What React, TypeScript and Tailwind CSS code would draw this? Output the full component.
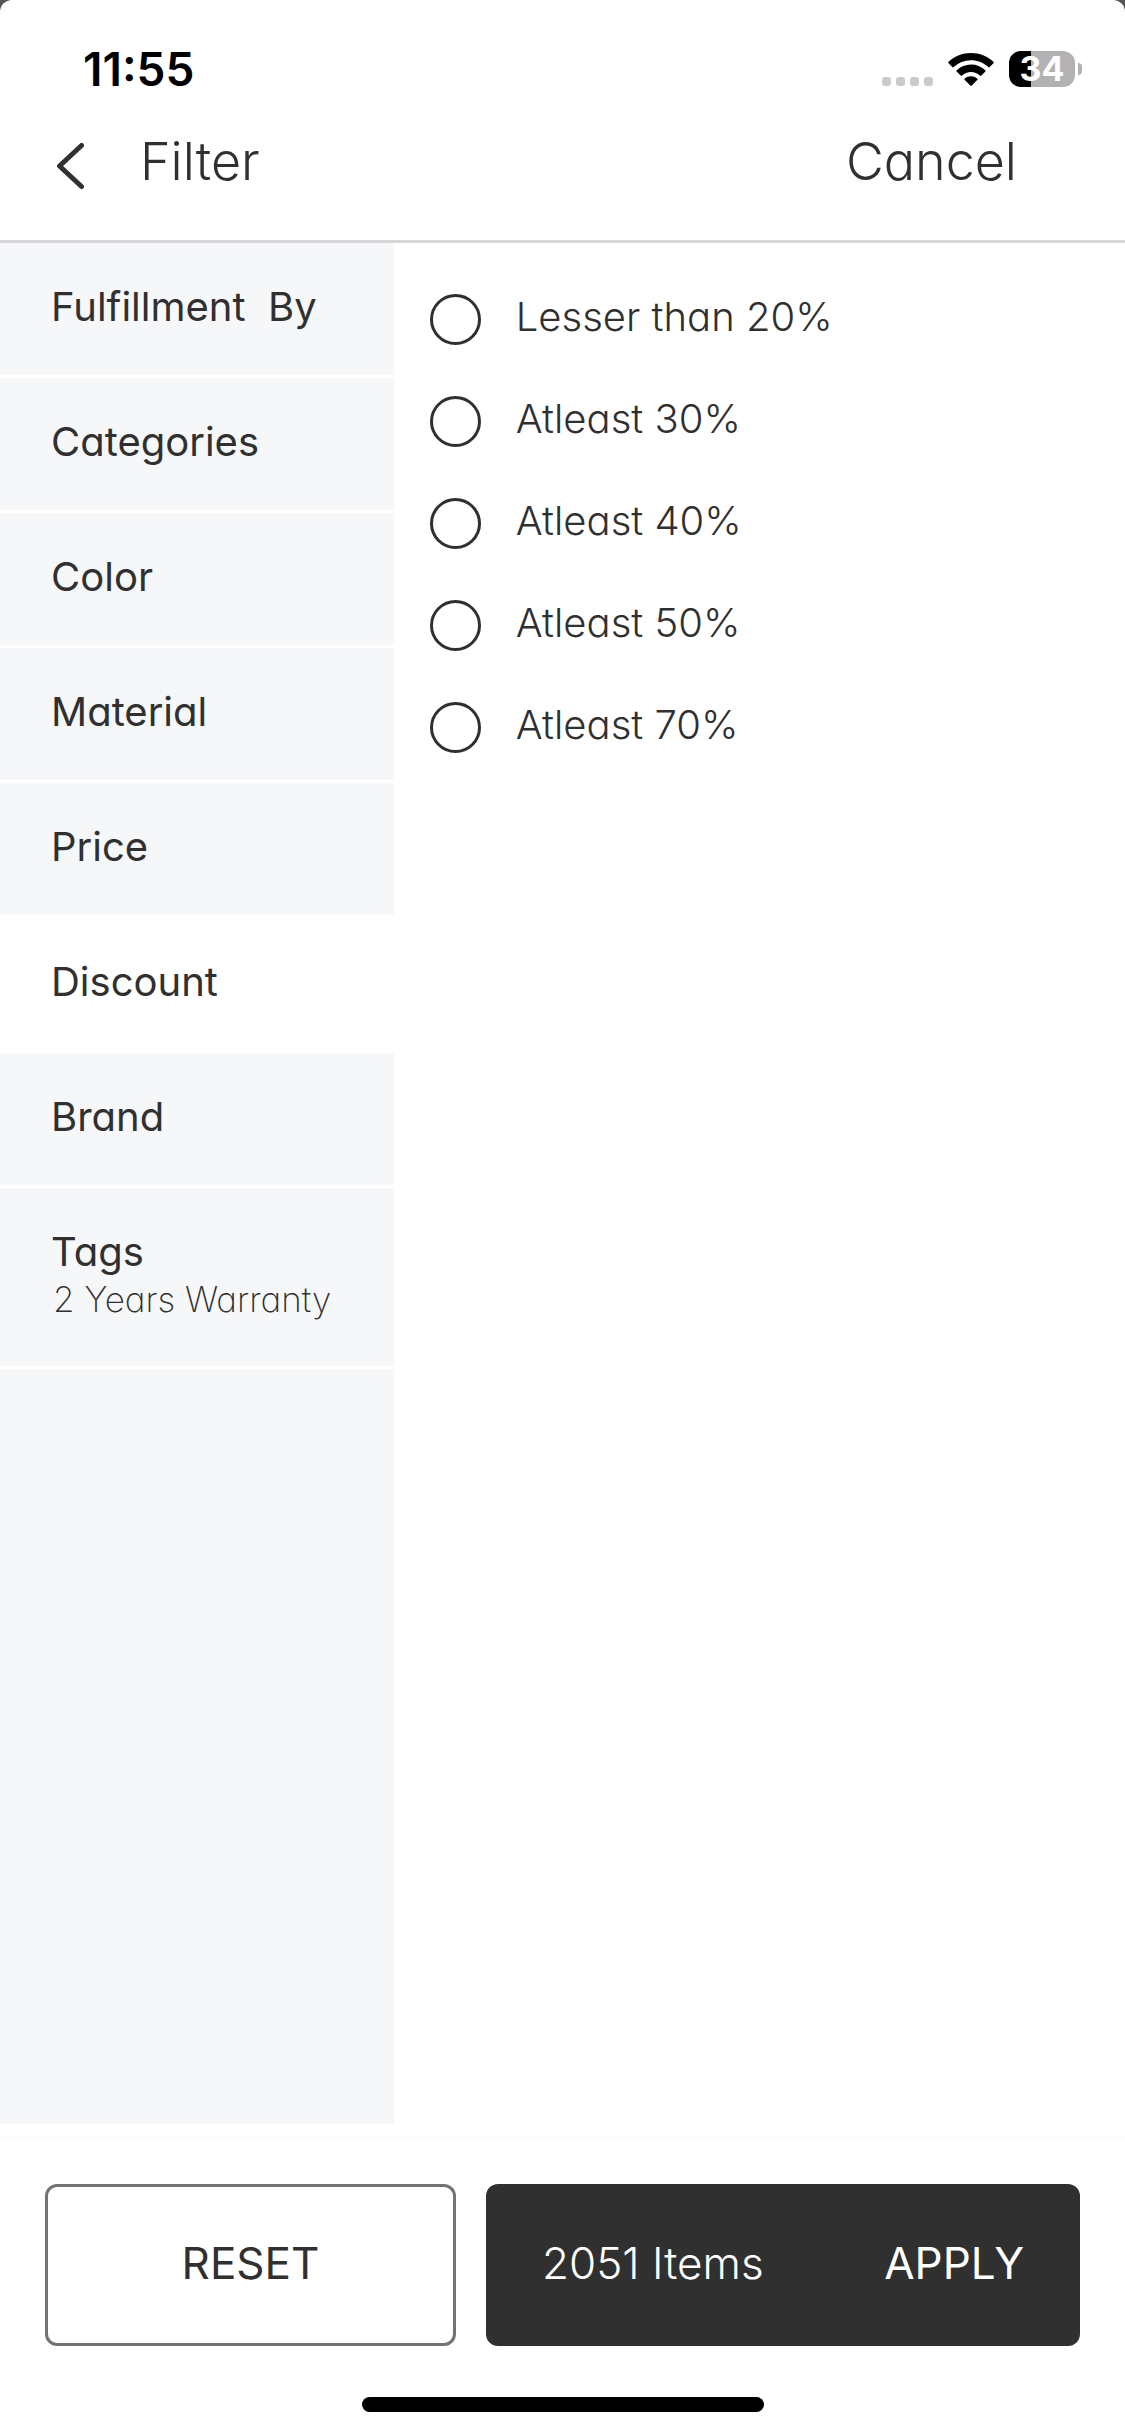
import { useState } from "react";

const FILTERS = [
  { name: "Fulfillment  By" },
  { name: "Categories" },
  { name: "Color" },
  { name: "Material" },
  { name: "Price" },
  { name: "Discount" },
  { name: "Brand" },
  { name: "Tags", selected: "2 Years Warranty" },
];

const DISCOUNTS = ["Lesser than 20%", "Atleast 30%", "Atleast 40%", "Atleast 50%", "Atleast 70%"];

function WifiIcon() {
  return (
    <svg viewBox="0 0 46 33" className="h-[33px] w-[46px]" aria-hidden="true">
      <path d="M23 0C14.5 0 6.6 3.3.6 8.8a1 1 0 0 0 0 1.5l3.7 3.8a1 1 0 0 0 1.4 0A25 25 0 0 1 23 7.2c6.6 0 12.7 2.6 17.3 6.9a1 1 0 0 0 1.4 0l3.7-3.8a1 1 0 0 0 0-1.5C39.4 3.3 31.5 0 23 0Z" />
      <path d="M23 11.6c-5.5 0-10.5 2.1-14.2 5.6a1 1 0 0 0 0 1.5l3.9 3.9a1 1 0 0 0 1.4 0A13 13 0 0 1 23 19c3.4 0 6.5 1.4 8.9 3.6a1 1 0 0 0 1.4 0l3.9-3.9a1 1 0 0 0 0-1.5A20.6 20.6 0 0 0 23 11.6Z" />
      <path d="M23 23.2c-2.4 0-4.5.9-6.2 2.3a1 1 0 0 0 0 1.5l5.5 5.6a1 1 0 0 0 1.4 0l5.5-5.6a1 1 0 0 0 0-1.5A9.4 9.4 0 0 0 23 23.2Z" />
    </svg>
  );
}

function StatusBar() {
  return (
    <div className="flex h-[138px] items-center justify-between pr-[43px] pl-[83px] text-black">
      <span className="text-[46px] leading-[48px] font-semibold">11:55</span>
      <div className="flex items-center">
        <div className="flex gap-[5px] pt-6">
          {[0, 1, 2, 3].map((dot) => (
            <span key={dot} className="size-[9px] rounded-[3px] bg-[#cbcbcb]" />
          ))}
        </div>
        <div className="mx-[15px]">
          <WifiIcon />
        </div>
        <div className="flex h-9 w-[66px] items-center justify-center rounded-xl bg-linear-to-r from-black from-34% to-[#b2b2b2] to-34%">
          <span className="text-[34px] leading-9 font-bold text-white">34</span>
        </div>
        <span className="ml-[3px] h-3 w-1 rounded-r-full bg-[#b2b2b2]" />
      </div>
    </div>
  );
}

export default function App() {
  const [active, setActive] = useState("Discount");
  const [discount, setDiscount] = useState<string | null>(null);

  return (
    <div className="min-h-screen bg-[#555] font-['Inter',sans-serif] text-[#303030] [font-feature-settings:'cv11']">
      <div className="flex min-h-screen flex-col rounded-t-xl bg-white">
        <header className="border-b-3 border-[#d6d6d8]">
          <StatusBar />
          <div className="flex items-start pr-[108px] pb-[46px] pl-14">
            <button type="button" aria-label="Back">
              <svg viewBox="0 0 28 56" className="h-14 w-7" fill="none" stroke="currentColor" strokeWidth="5" strokeLinecap="round" strokeLinejoin="round">
                <path d="M25.5 7.5 3.500 28l22 20.500" />
              </svg>
            </button>
            <h1 className="ml-14 text-[52px] leading-[48px] font-light">Filter</h1>
            <button type="button" className="ml-auto text-[52px] leading-[48px] font-light">
              Cancel
            </button>
          </div>
        </header>

        <main className="flex flex-1">
          <nav className="w-[35%] bg-[#f6f7f9]">
            {FILTERS.map((filter) => (
              <button
                key={filter.name}
                type="button"
                onClick={() => setActive(filter.name)}
                className={`block w-full border-b-3 border-white pt-10 pb-11 pl-[51px] text-left ${
                  active === filter.name ? "bg-white" : ""
                }`}
              >
                <span className="block text-[40px] leading-[48px] whitespace-pre">{filter.name}</span>
                {filter.selected && (
                  <span className="block pl-0.5 text-[35px] leading-[46px] font-extralight">{filter.selected}</span>
                )}
              </button>
            ))}
          </nav>

          <div role="radiogroup" aria-label={active} className="flex flex-1 flex-col gap-[51px] pt-[51px] pl-9">
            {DISCOUNTS.map((option) => (
              <label key={option} className="flex items-start">
                <input
                  type="radio"
                  name="discount"
                  checked={discount === option}
                  onChange={() => setDiscount(option)}
                  className="size-[51px] appearance-none rounded-full border-3 border-[#303030] checked:border-[14px]"
                />
                <span className="ml-[35px] text-[40px] leading-[46px] font-light">{option}</span>
              </label>
            ))}
          </div>
        </main>

        <footer className="mt-3 border-t-3 border-[#fbfbfb] px-[45px] pt-[45px] pb-6">
          <div className="grid grid-cols-[411fr_594fr] gap-[30px] text-[44px] leading-[60px]">
            <button type="button" className="h-[162px] rounded-xl border-3 border-[#737373] pb-1">
              RESET
            </button>
            <button type="button" className="flex h-[162px] items-center justify-between rounded-xl bg-[#303030] px-14 pb-1 text-white">
              <span className="font-light">2051 Items</span>
              <span>APPLY</span>
            </button>
          </div>
          <div className="mx-auto mt-[51px] h-[15px] w-[402px] rounded-full bg-black" />
        </footer>
      </div>
    </div>
  );
}
